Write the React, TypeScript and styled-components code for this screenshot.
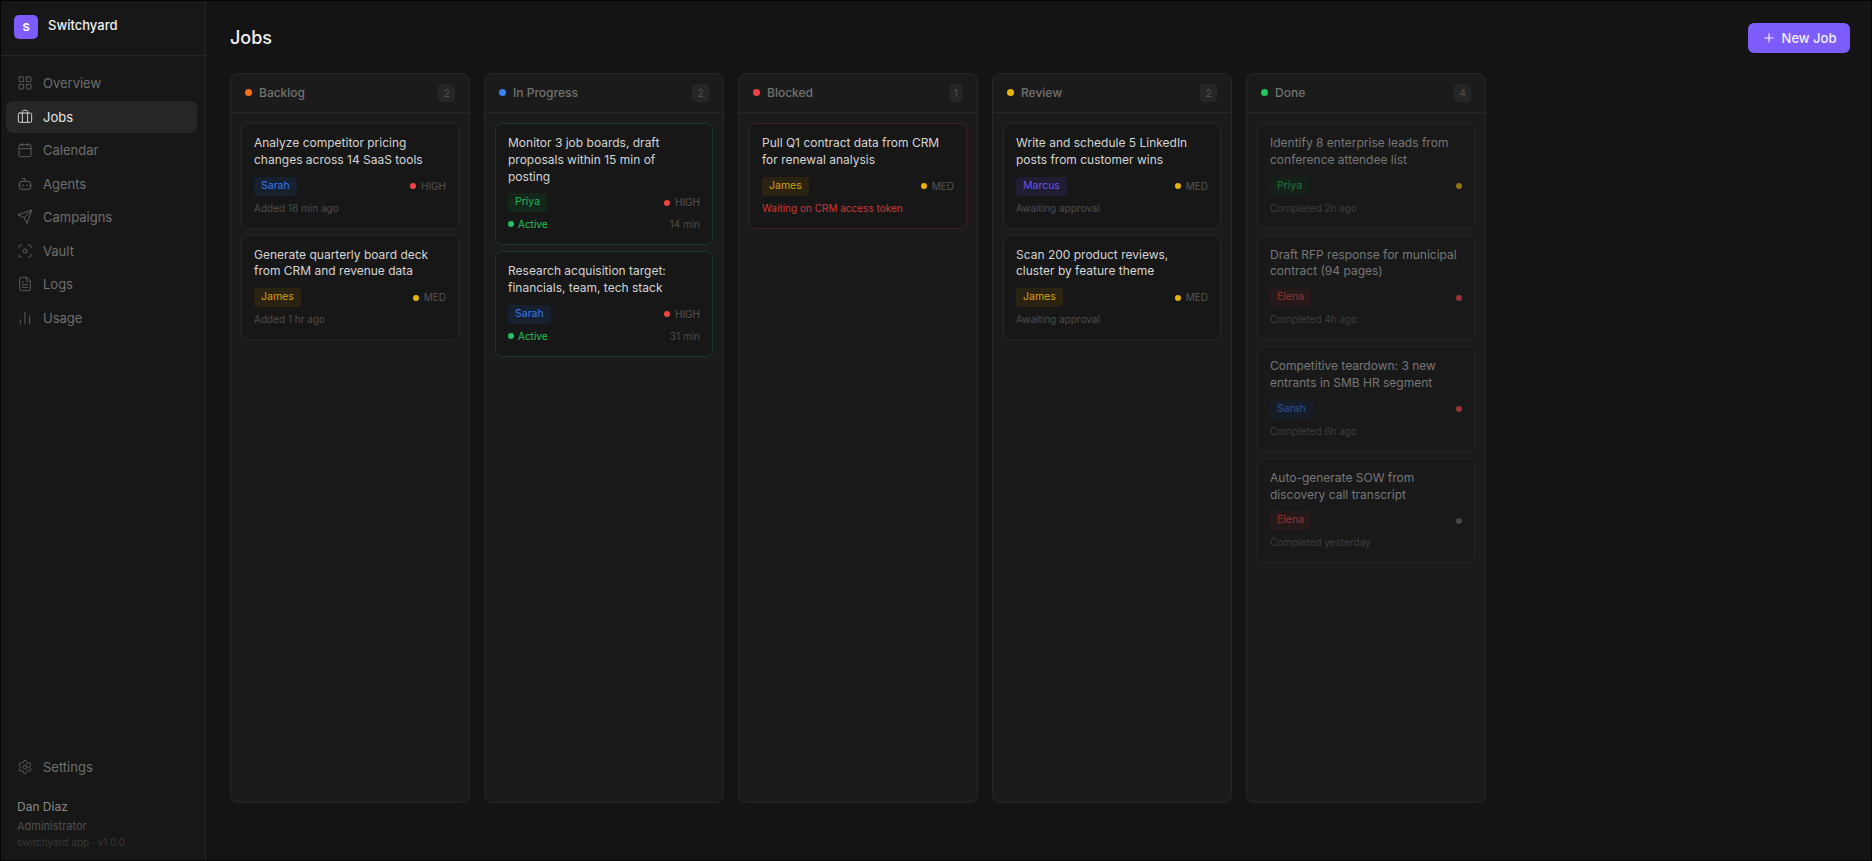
import styled, { createGlobalStyle } from 'styled-components';
import {
    Bot,
    Briefcase,
    Calendar,
    ChartNoAxesColumn,
    FileText,
    Focus,
    LayoutGrid,
    Plus,
    Settings,
} from 'lucide-react';

const GlobalStyle = createGlobalStyle`
    html, body, #root {
        height: 100%;
    }

    body {
        margin: 0;
        background: #141414;
        font-family: Inter, "Liberation Sans", sans-serif;
        -webkit-font-smoothing: antialiased;
    }

    * {
        box-sizing: border-box;
    }
`;

const Shell = styled.div`
    display: flex;
    height: 861px;
    border: 1px solid #050505;
    overflow: hidden;
`;

const Sidebar = styled.aside`
    display: flex;
    flex-direction: column;
    width: 205px;
    flex-shrink: 0;
    background: #171717;
    border-right: 1px solid #262626;
`;

const Brand = styled.div`
    display: flex;
    align-items: flex-start;
    gap: 10px;
    height: 55px;
    padding: 14px 13px 0;
    border-bottom: 1px solid #262626;
`;

const LogoMark = styled.div`
    display: flex;
    align-items: center;
    justify-content: center;
    width: 24px;
    height: 24px;
    border-radius: 5px;
    background: #7c5cfc;
    color: #fff;
    font-size: 11px;
    font-weight: 700;
`;

const BrandName = styled.span`
    color: #eeeeee;
    font-size: 13px;
    font-weight: 500;
    line-height: 20px;
`;

const Nav = styled.nav`
    display: flex;
    flex-direction: column;
    gap: 1.5px;
    flex: 1;
    padding: 11px 8px 10px 5px;
`;

const NavItem = styled.a<{ $active?: boolean }>`
    display: flex;
    align-items: center;
    gap: 10px;
    height: 32px;
    flex-shrink: 0;
    padding: 0 11px;
    border-radius: 7px;
    font-size: 13px;
    color: ${props => (props.$active ? '#e8e8e8' : '#6e6e6e')};
    background: ${props => (props.$active ? '#262626' : 'transparent')};

    svg {
        width: 16px;
        height: 16px;
        flex-shrink: 0;
        stroke-width: 1.5;
        color: ${props => (props.$active ? '#d0d0d0' : '#5c5c5c')};
    }
`;

const SidebarFooter = styled.div`
    display: flex;
    flex-direction: column;
    padding: 0 8px 10px 5px;
`;

const UserBlock = styled.div`
    display: flex;
    flex-direction: column;
    padding: 15px 11px 0;
`;

const UserName = styled.span`
    margin-bottom: 1px;
    color: #8a8a8a;
    font-size: 12px;
    line-height: 18px;
`;

const UserRole = styled.span`
    color: #505050;
    font-size: 11px;
    line-height: 18px;
`;

const VersionText = styled.span`
    color: #383838;
    font-size: 10px;
    line-height: 15px;
`;

const Main = styled.main`
    display: flex;
    flex-direction: column;
    flex: 1;
    min-width: 0;
    padding: 22px 21px 57px 24px;
`;

const TopBar = styled.header`
    display: flex;
    align-items: center;
    justify-content: space-between;
    height: 30px;
    margin-bottom: 20px;
`;

const PageTitle = styled.h1`
    margin: 0;
    padding-bottom: 2px;
    color: #f0f0f0;
    font-size: 18px;
    font-weight: 500;
`;

const NewJobButton = styled.button`
    display: flex;
    align-items: center;
    justify-content: center;
    gap: 6px;
    width: 102px;
    height: 30px;
    border: 0;
    border-radius: 6px;
    background: #7c5cfc;
    color: #f3f0ff;
    font-family: inherit;
    font-size: 13px;
    font-weight: 500;

    svg {
        width: 14px;
        height: 14px;
    }
`;

const Board = styled.div`
    display: flex;
    flex: 1;
    gap: 14px;
    min-height: 0;
`;

const Column = styled.section`
    display: flex;
    flex-direction: column;
    width: 240px;
    flex-shrink: 0;
    background: #1b1b1b;
    border: 1px solid #262626;
    border-radius: 8px;
`;

const ColumnHeader = styled.div`
    display: flex;
    align-items: center;
    gap: 7px;
    height: 39px;
    flex-shrink: 0;
    padding: 0 14px 1px;
    border-bottom: 1px solid #262626;
`;

const Dot = styled.span<{ $color: string; $size?: number }>`
    width: ${props => props.$size ?? 7}px;
    height: ${props => props.$size ?? 7}px;
    flex-shrink: 0;
    border-radius: 50%;
    background: ${props => props.$color};
`;

const ColumnTitle = styled.span`
    flex: 1;
    color: #727272;
    font-size: 12px;
    font-weight: 500;
`;

const CountBadge = styled.span`
    display: flex;
    align-items: center;
    justify-content: center;
    height: 18px;
    padding: 0 5px;
    border-radius: 4px;
    background: #262626;
    color: #505050;
    font-size: 11px;
`;

const CardList = styled.div`
    display: flex;
    flex-direction: column;
    gap: 6px;
    padding: 10px;
`;

const AgentTag = styled.span<{ $color: string; $bg: string }>`
    padding: 0 7px;
    height: 19px;
    border-radius: 3px;
    background: ${props => props.$bg};
    color: ${props => props.$color};
    font-size: 10.5px;
    line-height: 17px;
`;

const Priority = styled.span`
    display: flex;
    align-items: center;
    gap: 5px;
    padding-bottom: 1px;
    color: #555555;
    font-size: 10px;

    ${Dot} {
        margin-top: 1px;
    }
`;

const FootText = styled.span<{ $color?: string }>`
    color: ${props => props.$color ?? '#4d4d4d'};
    font-size: 10px;
    line-height: 14px;
`;

const Card = styled.article<{ $tone?: 'active' | 'blocked'; $done?: boolean }>`
    display: flex;
    flex-direction: column;
    padding: 11px 12px 13px;
    background: ${props => (props.$done ? '#191919' : '#171717')};
    border: 1px solid
        ${props => {
            if (props.$tone === 'active') return '#17372a';
            if (props.$tone === 'blocked') return '#3a2020';
            return props.$done ? '#232323' : '#262626';
        }};
    border-radius: 6px;

    ${AgentTag}, ${Priority} ${Dot} {
        opacity: ${props => (props.$done ? 0.6 : 1)};
    }

    ${FootText} {
        opacity: ${props => (props.$done ? 0.7 : 1)};
    }
`;

const CardTitle = styled.p<{ $done?: boolean }>`
    margin: 0 0 8px;
    color: ${props => (props.$done ? '#777777' : '#d4d4d4')};
    font-size: 12px;
    line-height: 1.4;
`;

const MetaRow = styled.div`
    display: flex;
    align-items: center;
    justify-content: space-between;
`;

const FootRow = styled(MetaRow)`
    margin-top: 5px;
    height: 14px;
`;

const ActiveLabel = styled.span`
    display: flex;
    align-items: center;
    gap: 4px;
    color: #22c55e;
    font-size: 10px;
`;

const AGENTS = {
    Sarah: { color: '#3b76f0', bg: '#17202f' },
    James: { color: '#d9a008', bg: '#2a2312' },
    Priya: { color: '#22b455', bg: '#14261a' },
    Marcus: { color: '#6f54e8', bg: '#201c32' },
    Elena: { color: '#e04545', bg: '#2e1a1a' },
};

const PRIORITY_COLORS = { HIGH: '#ef4444', MED: '#eab308', LOW: '#666666' };

type AgentName = keyof typeof AGENTS;
type PriorityLevel = keyof typeof PRIORITY_COLORS;

interface Job {
    title: string;
    agent: AgentName;
    priority: PriorityLevel;
    note?: string;
    elapsed?: string;
    blockedBy?: string;
}

interface BoardColumn {
    name: string;
    color: string;
    done?: boolean;
    jobs: Job[];
}

const COLUMNS: BoardColumn[] = [
    {
        name: 'Backlog',
        color: '#f97316',
        jobs: [
            {
                title: 'Analyze competitor pricing changes across 14 SaaS tools',
                agent: 'Sarah',
                priority: 'HIGH',
                note: 'Added 18 min ago',
            },
            {
                title: 'Generate quarterly board deck from CRM and revenue data',
                agent: 'James',
                priority: 'MED',
                note: 'Added 1 hr ago',
            },
        ],
    },
    {
        name: 'In Progress',
        color: '#3b82f6',
        jobs: [
            {
                title: 'Monitor 3 job boards, draft proposals within 15 min of posting',
                agent: 'Priya',
                priority: 'HIGH',
                elapsed: '14 min',
            },
            {
                title: 'Research acquisition target: financials, team, tech stack',
                agent: 'Sarah',
                priority: 'HIGH',
                elapsed: '31 min',
            },
        ],
    },
    {
        name: 'Blocked',
        color: '#ef4444',
        jobs: [
            {
                title: 'Pull Q1 contract data from CRM for renewal analysis',
                agent: 'James',
                priority: 'MED',
                blockedBy: 'Waiting on CRM access token',
            },
        ],
    },
    {
        name: 'Review',
        color: '#eab308',
        jobs: [
            {
                title: 'Write and schedule 5 LinkedIn posts from customer wins',
                agent: 'Marcus',
                priority: 'MED',
                note: 'Awaiting approval',
            },
            {
                title: 'Scan 200 product reviews, cluster by feature theme',
                agent: 'James',
                priority: 'MED',
                note: 'Awaiting approval',
            },
        ],
    },
    {
        name: 'Done',
        color: '#22c55e',
        done: true,
        jobs: [
            {
                title: 'Identify 8 enterprise leads from conference attendee list',
                agent: 'Priya',
                priority: 'MED',
                note: 'Completed 2h ago',
            },
            {
                title: 'Draft RFP response for municipal contract (94 pages)',
                agent: 'Elena',
                priority: 'HIGH',
                note: 'Completed 4h ago',
            },
            {
                title: 'Competitive teardown: 3 new entrants in SMB HR segment',
                agent: 'Sarah',
                priority: 'HIGH',
                note: 'Completed 6h ago',
            },
            {
                title: 'Auto-generate SOW from discovery call transcript',
                agent: 'Elena',
                priority: 'LOW',
                note: 'Completed yesterday',
            },
        ],
    },
];

// sharp-cornered paper plane, the packaged Send icon is rounder than the one in the design
function PlaneIcon() {
    return (
        <svg viewBox="0 0 24 24" fill="none" stroke="currentColor" strokeLinecap="round" strokeLinejoin="round">
            <path d="m22 2-7 20-4-9-9-4Z" />
            <path d="M22 2 11 13" />
        </svg>
    );
}

const NAV_ITEMS = [
    { label: 'Overview', icon: <LayoutGrid /> },
    { label: 'Jobs', icon: <Briefcase />, active: true },
    { label: 'Calendar', icon: <Calendar /> },
    { label: 'Agents', icon: <Bot /> },
    { label: 'Campaigns', icon: <PlaneIcon /> },
    { label: 'Vault', icon: <Focus /> },
    { label: 'Logs', icon: <FileText /> },
    { label: 'Usage', icon: <ChartNoAxesColumn /> },
];

function JobCard({ job, done }: { job: Job; done?: boolean }) {
    const agent = AGENTS[job.agent];
    const tone = job.elapsed ? 'active' : job.blockedBy ? 'blocked' : undefined;

    let footer;

    if (job.elapsed) {
        footer = (
            <>
                <ActiveLabel>
                    <Dot $color="#22c55e" $size={6} />
                    Active
                </ActiveLabel>
                <FootText>{job.elapsed}</FootText>
            </>
        );
    } else if (job.blockedBy) {
        footer = <FootText $color="#c93a3a">{job.blockedBy}</FootText>;
    } else {
        footer = <FootText>{job.note}</FootText>;
    }

    return (
        <Card $tone={tone} $done={done}>
            <CardTitle $done={done}>{job.title}</CardTitle>
            <MetaRow>
                <AgentTag $color={agent.color} $bg={agent.bg}>
                    {job.agent}
                </AgentTag>
                <Priority>
                    <Dot $color={PRIORITY_COLORS[job.priority]} $size={6} />
                    {!done && job.priority}
                </Priority>
            </MetaRow>
            <FootRow>{footer}</FootRow>
        </Card>
    );
}

export default function App() {
    return (
        <>
            <GlobalStyle />
            <Shell>
                <Sidebar>
                    <Brand>
                        <LogoMark>S</LogoMark>
                        <BrandName>Switchyard</BrandName>
                    </Brand>
                    <Nav>
                        {NAV_ITEMS.map(item => (
                            <NavItem key={item.label} $active={item.active}>
                                {item.icon}
                                {item.label}
                            </NavItem>
                        ))}
                    </Nav>
                    <SidebarFooter>
                        <NavItem>
                            <Settings />
                            Settings
                        </NavItem>
                        <UserBlock>
                            <UserName>Dan Diaz</UserName>
                            <UserRole>Administrator</UserRole>
                            <VersionText>switchyard.app · v1.0.0</VersionText>
                        </UserBlock>
                    </SidebarFooter>
                </Sidebar>
                <Main>
                    <TopBar>
                        <PageTitle>Jobs</PageTitle>
                        <NewJobButton>
                            <Plus />
                            New Job
                        </NewJobButton>
                    </TopBar>
                    <Board>
                        {COLUMNS.map(column => (
                            <Column key={column.name}>
                                <ColumnHeader>
                                    <Dot $color={column.color} />
                                    <ColumnTitle>{column.name}</ColumnTitle>
                                    <CountBadge>{column.jobs.length}</CountBadge>
                                </ColumnHeader>
                                <CardList>
                                    {column.jobs.map(job => (
                                        <JobCard key={job.title} job={job} done={column.done} />
                                    ))}
                                </CardList>
                            </Column>
                        ))}
                    </Board>
                </Main>
            </Shell>
        </>
    );
}
